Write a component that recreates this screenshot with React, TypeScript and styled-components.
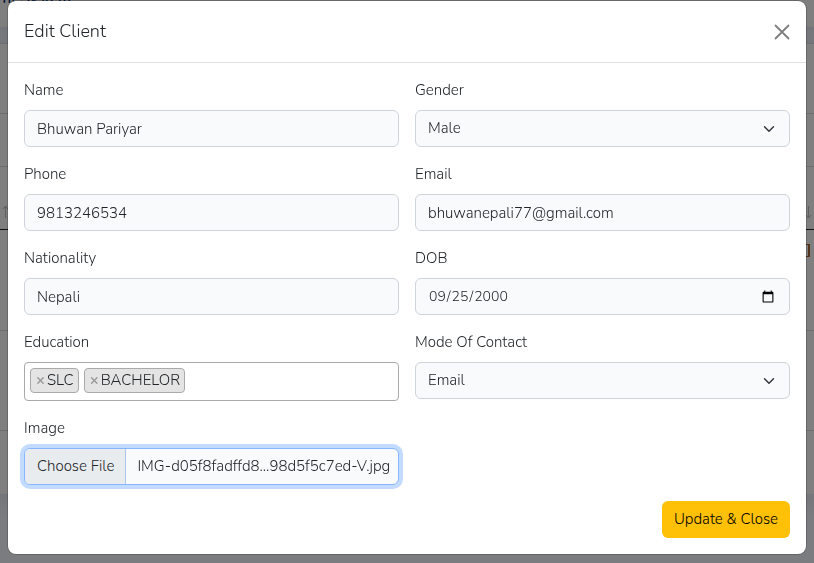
import React, { useState } from "react";
import type { ReactNode } from "react";
import styled, { createGlobalStyle, css } from "styled-components";

const GlobalStyle = createGlobalStyle`
  *, *::before, *::after { box-sizing: border-box; }
  body {
    margin: 0;
    overflow: hidden;
    background: #f6f9ff;
    color: #212529;
    font-family: "Nunito", "Lato", "Open Sans", sans-serif;
    font-size: 15px;
    font-weight: 300;
    line-height: 23px;
  }
  button, input, select { font: inherit; color: inherit; }
`;

/* ---- Page behind the dialog ---- */

const Page = styled.div`
  height: 100vh;
  overflow: hidden;
`;

const SiteHeader = styled.header`
  display: flex;
  align-items: flex-end;
  height: 27px;
  padding-bottom: 17px;
  background: #fff;
  box-shadow: 0 2px 8px rgba(1, 41, 112, 0.1);
`;

const SiteTitle = styled.span`
  display: flex;
  justify-content: flex-end;
  width: 71px;
  font-weight: 600;
  white-space: nowrap;
  color: #012970;
`;

const RecordsCard = styled.main`
  margin-top: 16px;
  background: #fff;
  box-shadow: 0 0 30px rgba(1, 41, 112, 0.2);
`;

const Band = styled.div<{ $height: number; $strong?: boolean }>`
  display: flex;
  align-items: flex-end;
  justify-content: space-between;
  height: ${(p) => p.$height}px;
  border-top: 1px solid ${(p) => (p.$strong ? "#212529" : "#d9dcdf")};
`;

const SortMark = styled.svg`
  width: 8px;
  height: 14px;
  margin-bottom: 10px;
  fill: none;
  stroke: #bcbcbc;
`;

const CellEdge = styled.span`
  align-self: flex-start;
  width: 4px;
  height: 13px;
  margin: 14px 4px 0 auto;
  border: solid #a8683a;
  border-width: 1px 2px 1px 0;
`;

/* ---- Dialog ---- */

const Overlay = styled.div`
  position: fixed;
  inset: 0;
  padding: 1px 8px 8px;
  background: rgba(0, 0, 0, 0.5);
`;

const Dialog = styled.section`
  overflow: hidden;
  background: #fff;
  border-radius: 8px;
  box-shadow: 0 0 0 1px rgba(0, 0, 0, 0.18);
`;

const DialogHeader = styled.header`
  display: flex;
  align-items: center;
  justify-content: space-between;
  height: 62px;
  padding: 0 16px;
  border-bottom: 1px solid #dee2e6;
`;

const DialogTitle = styled.h5`
  margin: 0;
  font-size: 18px;
  font-weight: 300;
  line-height: 27px;
`;

const CloseButton = styled.button`
  display: flex;
  padding: 0;
  border: 0;
  background: none;
  color: #000;
  opacity: 0.5;
  cursor: pointer;

  svg { width: 16px; height: 16px; }
`;

const Form = styled.form`
  display: grid;
  grid-template-columns: 1fr 1fr;
  gap: 16px;
  padding: 16px;
`;

const FieldBox = styled.div`
  display: flex;
  flex-direction: column;
  gap: 8px;
  min-width: 0;
`;

const controlStyle = css`
  width: 100%;
  height: 37px;
  padding: 6px 12px;
  border: 1px solid #ced4da;
  border-radius: 6px;
  background-color: #f8fafc;
`;

const TextInput = styled.input`
  ${controlStyle}
`;

const DateInput = styled.input`
  ${controlStyle}
  font-size: 14px;
`;

const Select = styled.select`
  ${controlStyle}
  appearance: none;
  padding-right: 36px;
  background-image: url("data:image/svg+xml,%3csvg xmlns='http://www.w3.org/2000/svg' viewBox='0 0 16 16'%3e%3cpath fill='none' stroke='%23343a40' stroke-linecap='round' stroke-linejoin='round' stroke-width='2' d='m2 5 6 6 6-6'/%3e%3c/svg%3e");
  background-repeat: no-repeat;
  background-position: right 12px center;
  background-size: 16px 12px;
`;

const TagBox = styled.div`
  display: flex;
  align-items: flex-start;
  gap: 5px;
  height: 39px;
  padding: 5px;
  border: 1px solid #aaa;
  border-radius: 4px;
`;

const Tag = styled.span`
  display: flex;
  align-items: center;
  gap: 2px;
  height: 25px;
  padding: 0 4px 0 5px;
  border: 1px solid #aaa;
  border-radius: 4px;
  background: #e4e4e4;
`;

const TagRemove = styled.button`
  padding: 0;
  border: 0;
  background: none;
  color: #999;
  font-weight: 700;
  line-height: 23px;
  cursor: pointer;
`;

const TagSearch = styled.input`
  flex: 1;
  min-width: 0;
  height: 25px;
  padding: 0;
  border: 0;
  outline: 0;
  background: none;
`;

const FilePicker = styled.label`
  display: flex;
  height: 37px;
  overflow: hidden;
  border: 1px solid #86b7fe;
  border-radius: 6px;
  background: #f8fafc;
  box-shadow: 0 0 0 4px #c2dbfe;
  cursor: pointer;
`;

const FileInput = styled.input`
  position: absolute;
  width: 1px;
  height: 1px;
  overflow: hidden;
  opacity: 0;
`;

const FileButton = styled.span`
  padding: 6px 11px 6px 12px;
  border-right: 1px solid #a9c5ea;
  background: #e9ecef;
  white-space: nowrap;
`;

const FileName = styled.span`
  min-width: 0;
  padding: 6px 0 6px 11px;
  overflow: hidden;
  white-space: nowrap;
`;

const Actions = styled.div`
  display: flex;
  grid-column: 1 / -1;
  justify-content: flex-end;
`;

const SubmitButton = styled.button`
  height: 37px;
  padding: 0 12px;
  border: 0;
  border-radius: 6px;
  background: #ffc107;
  color: #000;
  cursor: pointer;
`;

function Field({ id, label, children }: { id: string; label: string; children: ReactNode }) {
  return (
    <FieldBox>
      <label htmlFor={id}>{label}</label>
      {children}
    </FieldBox>
  );
}

export default function App() {
  const [levels, setLevels] = useState(["SLC", "BACHELOR"]);
  const [fileName, setFileName] = useState("IMG-d05f8fadffd8...98d5f5c7ed-V.jpg");

  return (
    <>
      <GlobalStyle />
      <Page aria-hidden="true">
        <SiteHeader>
          <SiteTitle>nt System</SiteTitle>
        </SiteHeader>
        <RecordsCard>
          <Band $height={70} />
          <Band $height={53} />
          <Band $height={63}>
            <SortMark viewBox="0 0 8 14">
              <path d="M5.5 13V1M3 4l2.5-3L8 4" />
            </SortMark>
            <SortMark viewBox="0 0 8 14">
              <path d="M2.5 1v12M0 10l2.5 3L5 10" />
            </SortMark>
          </Band>
          <Band $height={101} $strong>
            <CellEdge />
          </Band>
          <Band $height={100} />
          <Band $height={64} />
        </RecordsCard>
      </Page>

      <Overlay>
        <Dialog role="dialog" aria-modal="true" aria-labelledby="dialog-title">
          <DialogHeader>
            <DialogTitle id="dialog-title">Edit Client</DialogTitle>
            <CloseButton type="button" aria-label="Close">
              <svg viewBox="0 0 16 16" fill="none" stroke="currentColor" strokeWidth="1.8" strokeLinecap="round">
                <path d="M1.5 1.5l13 13M14.5 1.5l-13 13" />
              </svg>
            </CloseButton>
          </DialogHeader>
          <Form onSubmit={(e) => e.preventDefault()}>
            <Field id="name" label="Name">
              <TextInput id="name" type="text" defaultValue="Bhuwan Pariyar" />
            </Field>
            <Field id="gender" label="Gender">
              <Select id="gender" defaultValue="Male">
                <option>Male</option>
                <option>Female</option>
              </Select>
            </Field>
            <Field id="phone" label="Phone">
              <TextInput id="phone" type="tel" defaultValue="9813246534" />
            </Field>
            <Field id="email" label="Email">
              <TextInput id="email" type="email" defaultValue="bhuwanepali77@gmail.com" />
            </Field>
            <Field id="nationality" label="Nationality">
              <TextInput id="nationality" type="text" defaultValue="Nepali" />
            </Field>
            <Field id="dob" label="DOB">
              <DateInput id="dob" type="date" defaultValue="2000-09-25" />
            </Field>
            <Field id="education" label="Education">
              <TagBox>
                {levels.map((level) => (
                  <Tag key={level}>
                    <TagRemove
                      type="button"
                      aria-label={`Remove ${level}`}
                      onClick={() => setLevels(levels.filter((l) => l !== level))}
                    >
                      ×
                    </TagRemove>
                    {level}
                  </Tag>
                ))}
                <TagSearch id="education" type="text" />
              </TagBox>
            </Field>
            <Field id="contact" label="Mode Of Contact">
              <Select id="contact" defaultValue="Email">
                <option>Email</option>
                <option>Phone</option>
              </Select>
            </Field>
            <Field id="image" label="Image">
              <FilePicker htmlFor="image">
                <FileInput
                  id="image"
                  type="file"
                  onChange={(e) => setFileName(e.target.files?.[0]?.name ?? fileName)}
                />
                <FileButton>Choose File</FileButton>
                <FileName>{fileName}</FileName>
              </FilePicker>
            </Field>
            <Actions>
              <SubmitButton type="submit">Update &amp; Close</SubmitButton>
            </Actions>
          </Form>
        </Dialog>
      </Overlay>
    </>
  );
}
